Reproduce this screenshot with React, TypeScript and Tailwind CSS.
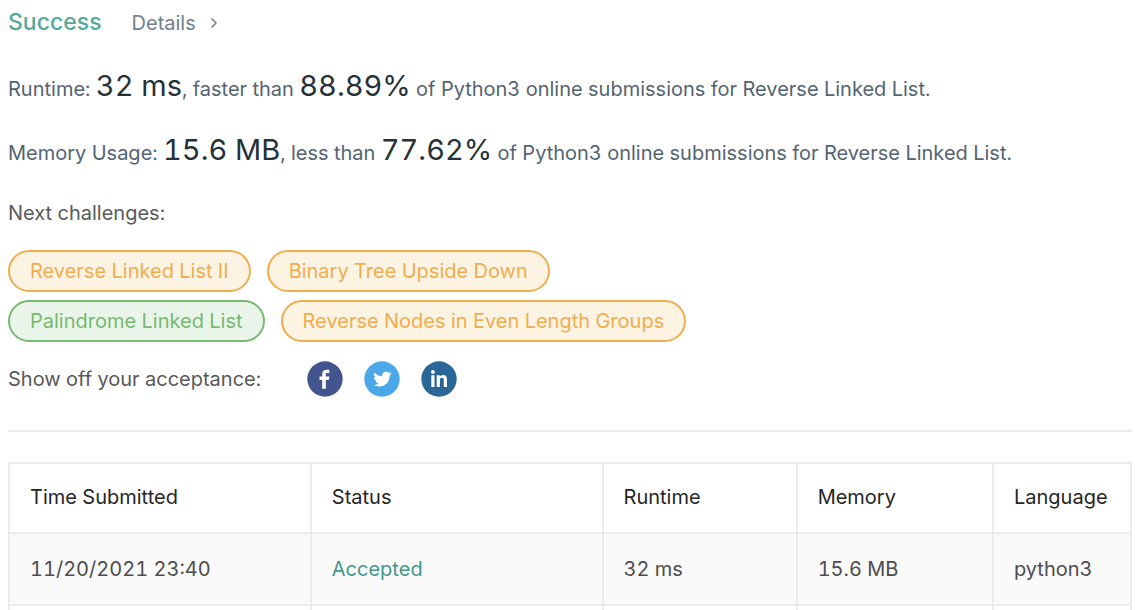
import { ChevronRight } from "lucide-react";

type Level = "medium" | "easy";

const challengeRows: { title: string; level: Level }[][] = [
  [
    { title: "Reverse Linked List II", level: "medium" },
    { title: "Binary Tree Upside Down", level: "medium" },
  ],
  [
    { title: "Palindrome Linked List", level: "easy" },
    { title: "Reverse Nodes in Even Length Groups", level: "medium" },
  ],
];

const levelStyles: Record<Level, string> = {
  medium: "border-[#f0ad4e] bg-[#fdf3e3] text-[#f0ad4e]",
  easy: "border-[#77b972] bg-[#e9f5e9] text-[#77b972]",
};

const columns = [
  { name: "Time Submitted", width: "w-[26.9%]" },
  { name: "Status", width: "w-[26%]" },
  { name: "Runtime", width: "w-[17.3%]" },
  { name: "Memory", width: "w-[17.5%]" },
  { name: "Language", width: "w-[12.3%]" },
];

function Metric({ children }: { children: string }) {
  return <span className="text-[29px] text-[#263238]">{children}</span>;
}

function Challenge({ title, level }: { title: string; level: Level }) {
  return (
    <a
      href="#challenge"
      className={`flex h-[42px] items-center rounded-full border-2 px-5 ${levelStyles[level]}`}
    >
      {title}
    </a>
  );
}

function SocialLinks() {
  return (
    <div className="flex items-center gap-[21px]">
      <a href="#facebook" aria-label="Share on Facebook">
        <svg className="size-9" viewBox="0 0 36 36">
          <circle cx="18" cy="18" r="17.7" fill="#43558f" />
          <path
            fill="#fff"
            d="M15.2 27.8V19h-2.7v-3.6h2.7v-2.2c0-3 1.8-4.4 4.5-4.4 1.2 0 2.2.1 2.6.2v3.1h-1.8c-1.4 0-1.7.7-1.7 1.6v1.7h3.5l-.5 3.6h-3v8.8z"
          />
        </svg>
      </a>
      <a href="#twitter" aria-label="Share on Twitter">
        <svg className="size-9" viewBox="0 0 36 36">
          <circle cx="18" cy="18" r="17.7" fill="#4aa8e8" />
          <path
            fill="#fff"
            transform="translate(9.3 9) scale(.76)"
            d="M23.95 4.57a10 10 0 0 1-2.82.77 4.96 4.96 0 0 0 2.16-2.72c-.95.55-2 .95-3.13 1.18a4.92 4.92 0 0 0-8.38 4.48C7.69 8.1 4.07 6.13 1.64 3.16a4.82 4.82 0 0 0-.67 2.48c0 1.71.87 3.21 2.19 4.1a4.9 4.9 0 0 1-2.23-.62v.06a4.92 4.92 0 0 0 3.95 4.83 5 5 0 0 1-2.21.08 4.94 4.94 0 0 0 4.6 3.42A9.87 9.87 0 0 1 0 19.54a13.99 13.99 0 0 0 7.55 2.21c9.05 0 14-7.5 14-13.98 0-.21 0-.42-.02-.63a9.94 9.94 0 0 0 2.42-2.57z"
          />
        </svg>
      </a>
      <a href="#linkedin" aria-label="Share on LinkedIn">
        <svg className="size-9" viewBox="0 0 36 36">
          <circle cx="18" cy="18" r="17.7" fill="#2a6796" />
          <circle cx="11.9" cy="11" r="1.9" fill="#fff" />
          <path
            fill="#fff"
            d="M10.3 14.2h3.2V26h-3.2zM15.7 14.2h3.1v1.6c.7-1.2 1.8-1.9 3.2-1.9 3.1 0 4 2 4 5.2V26h-3.2v-6.3c0-1.7-.2-3-1.8-3-1.7 0-2.1 1.3-2.1 3V26h-3.2z"
          />
        </svg>
      </a>
    </div>
  );
}

export default function App() {
  const cell = "border-2 border-[#ececec] px-5 text-left font-normal";
  return (
    <main className="h-screen overflow-hidden bg-white pl-2 pr-3 font-[Inter,sans-serif] text-[20px] leading-8 tabular-nums text-[#595959]">
      <header className="flex items-baseline gap-[30px] pt-1.5">
        <h1 className="text-[23px] font-medium text-[#56a899]">Success</h1>
        <a href="#details" className="flex items-center gap-2.5 text-[#71828b]">
          Details
          <ChevronRight className="size-4" strokeWidth={2.5} />
        </a>
      </header>

      <section className="mt-[31px] flex flex-col gap-[29px] text-[#546470]">
        <p>
          Runtime: <Metric>32 ms</Metric>, faster than <Metric>88.89%</Metric> of Python3 online
          submissions for Reverse Linked List.
        </p>
        <p>
          Memory Usage: <Metric>15.6 MB</Metric>, less than <Metric>77.62%</Metric> of Python3 online
          submissions for Reverse Linked List.
        </p>
      </section>

      <section>
        <h2 className="mt-7">Next challenges:</h2>
        <div className="mt-[21px] flex flex-col gap-2">
          {challengeRows.map((row) => (
            <div key={row[0].title} className="flex gap-4">
              {row.map((challenge) => (
                <Challenge key={challenge.title} {...challenge} />
              ))}
            </div>
          ))}
        </div>
      </section>

      <section className="mt-[19px] flex items-center gap-[46px]">
        <h2>Show off your acceptance:</h2>
        <SocialLinks />
      </section>

      <hr className="mt-[33px] border-t-2 border-[#ececec]" />

      <table className="mt-[30px] w-full table-fixed border-collapse">
        <thead>
          <tr className="h-[70px] text-[#262626]">
            {columns.map((column) => (
              <th key={column.name} scope="col" className={`${cell} pb-0.5 ${column.width}`}>
                {column.name}
              </th>
            ))}
          </tr>
        </thead>
        <tbody className="text-[#4d4d4d]">
          <tr className="h-[72px] bg-[#fafafa]">
            <td className={cell}>11/20/2021 23:40</td>
            <td className={cell}>
              <a href="#submission" className="text-[#43978a]">
                Accepted
              </a>
            </td>
            <td className={cell}>32 ms</td>
            <td className={cell}>15.6 MB</td>
            <td className={cell}>python3</td>
          </tr>
          <tr className="h-[72px]">
            <td className={cell} />
            <td className={cell} />
            <td className={cell} />
            <td className={cell} />
            <td className={cell} />
          </tr>
        </tbody>
      </table>
    </main>
  );
}
